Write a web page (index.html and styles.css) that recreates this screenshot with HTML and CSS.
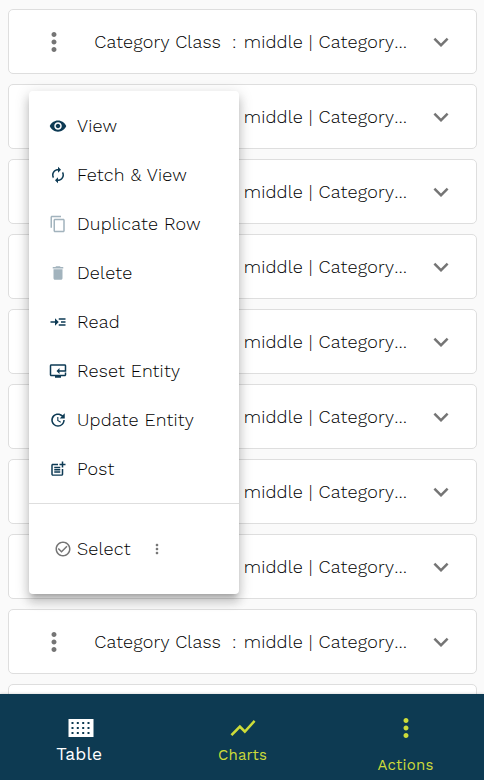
FILE: index.html
```html
<!DOCTYPE html>
<html lang="en">
<head>
<meta charset="utf-8">
<title>Categories</title>
<link rel="stylesheet" href="styles.css">
</head>
<body>
<svg class="defs" aria-hidden="true">
  <symbol id="more" viewBox="0 0 24 24"><path d="M12 8c1.1 0 2-.9 2-2s-.9-2-2-2-2 .9-2 2 .9 2 2 2zm0 2c-1.1 0-2 .9-2 2s.9 2 2 2 2-.9 2-2-.9-2-2-2zm0 6c-1.1 0-2 .9-2 2s.9 2 2 2 2-.9 2-2-.9-2-2-2z"/></symbol>
  <symbol id="expand" viewBox="0 0 24 24"><path d="M16.59 8.59 12 13.17 7.41 8.59 6 10l6 6 6-6z"/></symbol>
</svg>
<main class="list" id="list"></main>

<div class="menu">
  <ul class="menu-items">
    <li class="item"><svg class="icon" viewBox="0 0 24 24"><path d="M12 4.5C7 4.5 2.73 7.61 1 12c1.73 4.39 6 7.5 11 7.5s9.27-3.11 11-7.5c-1.73-4.39-6-7.5-11-7.5zM12 17c-2.76 0-5-2.24-5-5s2.24-5 5-5 5 2.24 5 5-2.24 5-5 5zm0-8c-1.66 0-3 1.34-3 3s1.34 3 3 3 3-1.34 3-3-1.34-3-3-3z"/></svg><span>View</span></li>
    <li class="item"><svg class="icon" viewBox="0 0 24 24"><path d="M12 6v3l4-4-4-4v3c-4.42 0-8 3.58-8 8 0 1.57.46 3.03 1.24 4.26L6.7 14.8c-.45-.83-.7-1.79-.7-2.8 0-3.31 2.69-6 6-6zm6.76 1.74L17.3 9.2c.44.84.7 1.79.7 2.8 0 3.31-2.69 6-6 6v-3l-4 4 4 4v-3c4.42 0 8-3.58 8-8 0-1.57-.46-3.03-1.24-4.26z"/></svg><span>Fetch &amp; View</span></li>
    <li class="item"><svg class="icon disabled" viewBox="0 0 24 24"><path d="M16 1H4c-1.1 0-2 .9-2 2v14h2V3h12V1zm3 4H8c-1.1 0-2 .9-2 2v14c0 1.1.9 2 2 2h11c1.100 0 2-.9 2-2V7c0-1.100-.9-2-2-2zm0 16H8V7h11v14z"/></svg><span>Duplicate Row</span></li>
    <li class="item"><svg class="icon disabled" viewBox="0 0 24 24"><path d="M6 19c0 1.1.9 2 2 2h8c1.100 0 2-.9 2-2V7H6v12zM19 4h-3.500l-1-1h-5l-1 1H5v2h14V4z"/></svg><span>Delete</span></li>
    <li class="item"><svg class="icon" viewBox="0 0 24 24"><path d="M13 7h9v2h-9zM13 15h9v2h-9zM16 11h6v2h-6zM13 12 8 7v4H2v2h6v4z"/></svg><span>Read</span></li>
    <li class="item"><svg class="icon" viewBox="0 0 24 24"><path d="M23 8V5c0-1.100-.9-2-2-2H3c-1.100 0-2 .9-2 2v12c0 1.100.9 2 2 2h5v2h8v-2h5c1.100 0 2-.9 2-2v-3h-2v3H3V5h18v3h2zm-2 5v-2h-7V8l-4 4 4 4v-3h9V8h-2v3z"/></svg><span>Reset Entity</span></li>
    <li class="item"><svg class="icon" viewBox="0 0 24 24"><path d="M21 10.120h-6.780l2.740-2.820c-2.730-2.700-7.150-2.800-9.880-.1-2.730 2.710-2.730 7.080 0 9.790s7.150 2.710 9.880 0C18.320 15.650 19 14.080 19 12.100h2c0 1.980-.88 4.550-2.640 6.290-3.510 3.480-9.210 3.480-12.720 0-3.500-3.470-3.530-9.110-.02-12.580s9.140-3.470 12.650 0L21 3v7.120zM12.500 8v4.250l3.500 2.080-.72 1.210L11 13V8h1.500z"/></svg><span>Update Entity</span></li>
    <li class="item"><svg class="icon" viewBox="0 0 24 24"><path d="M17 19.220H5V7h7V5H5c-1.100 0-2 .9-2 2v12c0 1.100.9 2 2 2h12c1.100 0 2-.9 2-2v-7h-2v7.220z"/><path d="M19 2h-2v3h-3v2h3v2.990h2V7h3V5h-3zM7 9h8v2H7zM7 12v2h8v-2h-3zM7 15h8v2H7z"/></svg><span>Post</span></li>
  </ul>
  <div class="select">
    <svg class="icon" viewBox="0 0 24 24"><path d="M16.590 7.580 10 14.170l-3.590-3.580L5 12l5 5 8-8zM12 2C6.480 2 2 6.480 2 12s4.480 10 10 10 10-4.480 10-10S17.520 2 12 2zm0 18c-4.420 0-8-3.580-8-8s3.580-8 8-8 8 3.580 8 8-3.580 8-8 8z"/></svg>
    <span>Select</span>
    <svg class="icon small-more"><use href="#more"/></svg>
  </div>
</div>

<nav class="bar">
  <a class="tab active"><svg class="tab-icon" viewBox="0 0 30 30"><path fill-rule="evenodd" d="M2.500 6h25v18h-25zM5.500 9v2h2V9zm5.300 0v2h2V9zm5.400 0v2h2V9zm5.300 0v2h2V9zM5.500 14v2h2v-2zm5.300 0v2h2v-2zm5.400 0v2h2v-2zm5.300 0v2h2v-2zM5.500 19v2h2v-2zm5.300 0v2h2v-2zm5.400 0v2h2v-2zm5.300 0v2h2v-2z"/></svg><span>Table</span></a>
  <a class="tab"><svg class="tab-icon" viewBox="0 0 24 24"><path d="m3.500 18.490 6-6.010 4 4L22 6.920l-1.410-1.410-7.090 7.970-4-4L2 16.990z"/></svg><span>Charts</span></a>
  <a class="tab actions"><svg class="tab-icon"><use href="#more"/></svg><span>Actions</span></a>
</nav>
<script src="list.js"></script>
</body>
</html>
```
FILE: styles.css
```css
* { box-sizing: border-box; }
html, body { height: 100%; }
body {
  margin: 0;
  overflow: hidden;
  background: #fafafa;
  color: #000;
  font-family: "Work Sans", "Open Sans", sans-serif;
  font-size: 18px;
  font-weight: 300;
  letter-spacing: .2px;
  line-height: 24px;
}
span { white-space: pre; }
svg { display: block; flex: none; fill: currentColor; }
.defs { position: absolute; width: 0; height: 0; }

.list { display: flex; flex-direction: column; gap: 10px; padding: 9px 7px 0 8px; height: 694px; overflow: hidden; }
.card {
  flex: none;
  display: flex;
  align-items: center;
  height: 65px;
  padding: 0 20px 0 30.4px;
  background: #fff;
  border: 1px solid #dedede;
  border-radius: 5px;
}
.card svg { width: 30px; height: 30px; color: #757575; }
.card .label { width: 137.8px; margin-left: 24.8px; }
.card .colon { width: 11.7px; }
.card .value { flex: 1; }
.card .dots { display: inline-block; }
.card.covered .label, .card.covered .colon { visibility: hidden; }

.menu {
  position: absolute;
  left: 29px;
  top: 91px;
  width: 210px;
  height: 503px;
  background: #fff;
  border-radius: 4px;
  box-shadow: 0 5px 5px -3px rgba(0,0,0,.2), 0 8px 10px 1px rgba(0,0,0,.14), 0 3px 14px 2px rgba(0,0,0,.12);
}
.menu-items { list-style: none; margin: 0; padding: 10px 0; border-bottom: 1px solid #dedede; }
.item { display: flex; align-items: center; gap: 10px; height: 49px; padding-left: 20px; }
.icon { width: 18px; height: 18px; color: #0d3a54; }
.icon.disabled { opacity: .38; }
.select { display: flex; align-items: center; height: 90px; padding-left: 25px; }
.select .icon { color: #757575; }
.select span { width: 75px; margin-left: 5px; }
.select .small-more { margin-left: -3px; width: 16px; height: 16px; }

.bar {
  position: absolute;
  left: 0;
  right: 0;
  bottom: 0;
  display: grid;
  grid-template-columns: 161px 163px 160px;
  height: 86px;
  background: #0d3a52;
  color: #cddc39;
  box-shadow: 0 0 3px rgba(0,0,0,.2);
}
.tab { display: flex; flex-direction: column; align-items: center; padding-top: 19px; font-size: 15px; font-weight: 400; }
.tab-icon { width: 30px; height: 30px; }
.active { color: #fff; font-size: 17.5px; }
.active span { margin: -1px 2.6px 0 0; }
.actions { padding-left: 3px; }
.actions span { margin-top: 10px; }
```
FILE: list.js
```js
const list = document.getElementById('list');
const ROWS = 9;
for (let i = 0; i <= ROWS; i++) {
  const card = document.createElement('article');
  card.className = 'card';
  // Rows behind the open menu keep their columns but hide the covered label.
  if (i > 0 && i < 8) card.classList.add('covered');
  // The row past the last full one only shows its top edge.
  if (i < ROWS) {
    card.innerHTML = '<svg><use href="#more"/></svg>' +
      '<span class="label">Category Class</span>' +
      '<span class="colon">:</span><span class="value">middle | Category<span class="dots">\u2026</span></span>' +
      '<svg><use href="#expand"/></svg>';
  }
  list.append(card);
}
```
